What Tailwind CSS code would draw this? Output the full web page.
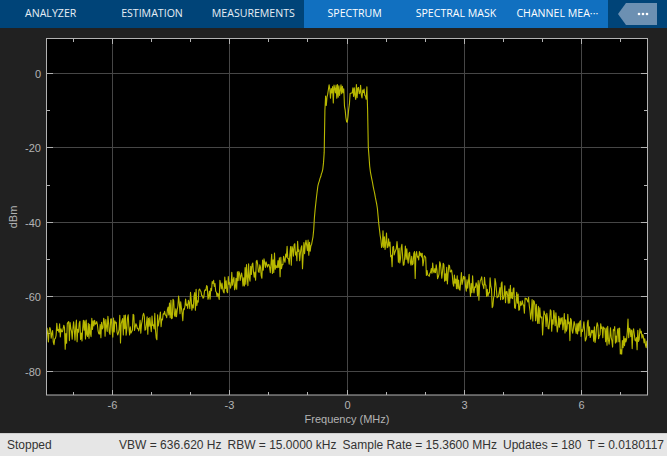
<!DOCTYPE html>
<html lang="en">
<head>
  <meta charset="UTF-8" />
  <title>Spectrum Analyzer</title>
  <script src="https://cdn.jsdelivr.net/npm/@tailwindcss/browser@4"></script>
</head>
<body class="w-[667px] h-[456px] overflow-hidden flex flex-col bg-[#212121] font-['Liberation_Sans',sans-serif]">

  <!-- Toolstrip tabs -->
  <header class="h-[28px] shrink-0 flex bg-[#004478] text-[#e6eef5] text-[10.6px] font-['Open_Sans',sans-serif]">
    <div class="w-[304px] grid grid-cols-3">
      <div class="flex items-center justify-center">ANALYZER</div>
      <div class="flex items-center justify-center">ESTIMATION</div>
      <div class="flex items-center justify-center">MEASUREMENTS</div>
    </div>
    <div class="w-[304px] grid grid-cols-3 bg-[#1170c0] text-white">
      <div class="flex items-center justify-center">SPECTRUM</div>
      <div class="flex items-center justify-center">SPECTRAL MASK</div>
      <div class="flex items-center justify-center">CHANNEL MEA···</div>
    </div>
    <div class="flex-1 flex items-center pl-[10px]">
      <svg width="39" height="22" viewBox="0 0 39 22">
        <path d="M0 11L8 0H39V22H8Z" fill="#6c90b2" />
        <circle cx="21" cy="11" r="1.3" fill="#fff" />
        <circle cx="25" cy="11" r="1.3" fill="#fff" />
        <circle cx="29" cy="11" r="1.3" fill="#fff" />
      </svg>
    </div>
  </header>

  <!-- Scope axes -->
  <main class="flex-1 relative">
    <svg id="scope" width="667" height="405" viewBox="0 28 667 405" class="block font-['Liberation_Sans',sans-serif] text-[11px]">
      <rect x="46.5" y="38.5" width="601" height="356.5" fill="#000" />
      <g id="grid" stroke="#464646" stroke-width="1">
        <path d="M112.5 39V395M229.5 39V395M347.5 39V395M464.5 39V395M581.5 39V395" />
        <path d="M47 73.5H647M47 147.5H647M47 222.5H647M47 296.5H647M47 371.5H647" />
      </g>
      <g stroke="#b3b3b3" stroke-width="1">
        <path d="M73.5 39v3M112.5 39v5M151.5 39v3M190.5 39v3M229.5 39v5M268.5 39v3M307.5 39v3M347.5 39v5M386.5 39v3M425.5 39v3M464.5 39v5M503.5 39v3M542.5 39v3M581.5 39v5M620.5 39v3" />
        <path d="M73.5 395v-3M112.5 395v-5M151.5 395v-3M190.5 395v-3M229.5 395v-5M268.5 395v-3M307.5 395v-3M347.5 395v-5M386.5 395v-3M425.5 395v-3M464.5 395v-5M503.5 395v-3M542.5 395v-3M581.5 395v-5M620.5 395v-3" />
        <path d="M47 73.5h6M47 110.5h3M47 147.5h6M47 185.5h3M47 222.5h6M47 259.5h3M47 296.5h6M47 333.5h3M47 371.5h6" />
        <path d="M647 73.5h-6M647 110.5h-3M647 147.5h-6M647 185.5h-3M647 222.5h-6M647 259.5h-3M647 296.5h-6M647 333.5h-3M647 371.5h-6" />
      </g>
      <polyline id="trace" fill="none" stroke="#b8b800" stroke-width="1.1" stroke-linejoin="round" />
      <rect x="46.5" y="38.5" width="601" height="356.5" fill="none" stroke="#b3b3b3" stroke-width="1" />
      <g fill="#b4b4b4" text-anchor="end">
        <text x="41" y="77.5">0</text>
        <text x="41" y="151.5">-20</text>
        <text x="41" y="226.5">-40</text>
        <text x="41" y="300.5">-60</text>
        <text x="41" y="375.5">-80</text>
      </g>
      <g fill="#b4b4b4" text-anchor="middle">
        <text x="112.5" y="409">-6</text>
        <text x="229.5" y="409">-3</text>
        <text x="347.5" y="409">0</text>
        <text x="464.5" y="409">3</text>
        <text x="581.5" y="409">6</text>
        <text x="347" y="423">Frequency (MHz)</text>
        <text transform="translate(17 217) rotate(-90)">dBm</text>
      </g>
    </svg>
  </main>

  <!-- Status bar -->
  <footer class="h-[23px] shrink-0 flex items-center justify-between pl-[7px] pr-[3px] bg-[#e6e6e6] border-t border-[#cfcfcf] text-[12px] text-[#333]">
    <span>Stopped</span>
    <div class="flex gap-[6px]">
      <span>VBW = 636.620 Hz</span>
      <span>RBW = 15.0000 kHz</span>
      <span>Sample Rate = 15.3600 MHz</span>
      <span>Updates = 180</span>
      <span>T = 0.0180117</span>
    </div>
  </footer>

  <script>
    // envelope of the spectrum, x in px -> y in px
    const env = [[47,335],[107,327],[160,323],[167,312],[227,284],[273,264],[310,245],[312.5,240],[313.5,233],[314.5,216],[316.7,195],[318,185],[322.7,170],[324,158],[324.4,147],[325,103],[326,92],[366,92],[367.3,93],[368.3,147],[370,170],[373.3,187],[377.3,207],[378.7,223],[380.7,240],[403,255],[437,270],[470,285],[487,286],[520,300],[543,318],[577,328],[610,337],[647,340]];

    // xorshift, seeded so the trace is the same on every load
    let state = 2463534242;
    function rnd() {
      state ^= state << 13;
      state ^= state >>> 17;
      state ^= state << 5;
      return (state >>> 0) / 4294967296;
    }

    function meanAt(x) {
      for (let i = 1; i < env.length; i++) {
        if (x <= env[i][0]) {
          const a = env[i - 1], b = env[i];
          return a[1] + (b[1] - a[1]) * (x - a[0]) / (b[0] - a[0]);
        }
      }
      return env[env.length - 1][1];
    }

    const pts = [];
    for (let x = 47; x <= 647; x += 0.7) {
      const inBand = x >= 326 && x <= 367;
      const inSkirt = (x > 312 && x < 326) || (x > 367 && x < 381);
      let y = meanAt(x);
      if (inSkirt) {
        y += (rnd() - 0.5) * 0.8;
      } else {
        y += (rnd() - 0.5) * (inBand ? 15 : 22);
        if (rnd() < 0.05) y += inBand ? 7 : 10;
      }
      // notch at DC
      if (x > 344 && x < 350) y = 98 + (1 - Math.abs(x - 346.8) / 3) * 25 + (rnd() - 0.5) * 8;
      // bump and dip near the right edge
      if (x > 625 && x < 631) y -= 9;
      if (x > 620 && x < 623) y += 8;
      pts.push(x.toFixed(1) + ',' + y.toFixed(1));
    }
    document.getElementById('trace').setAttribute('points', pts.join(' '));
  </script>
</body>
</html>
